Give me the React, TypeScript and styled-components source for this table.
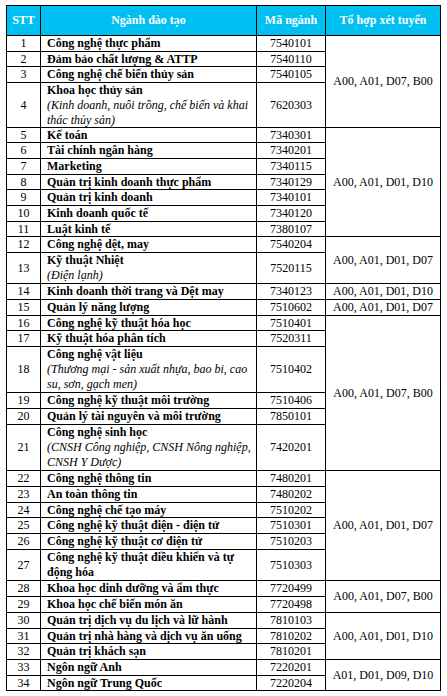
import React from "react";
import styled, { createGlobalStyle } from "styled-components";

const Global = createGlobalStyle`
  html, body { margin: 0; padding: 0; background: #ffffff; }
  body { font-family: "Liberation Serif", "Times New Roman", serif; color: #000; }
`;

const Page = styled.div`
  padding: 5px 0 0 6px;
`;

const Table = styled.div<{ $rows: string }>`
  display: grid;
  grid-template-columns: 34px 216px 69px 115px;
  grid-template-rows: ${(p) => p.$rows};
  width: 435px;
  box-sizing: border-box;
  border-top: 1px solid #000;
  border-left: 1px solid #000;
`;

const Cell = styled.div<{ $col: number; $span?: number }>`
  grid-column: ${(p) => p.$col};
  grid-row: span ${(p) => p.$span ?? 1};
  box-sizing: border-box;
  border-right: 1px solid #000;
  border-bottom: 1px solid #000;
  display: flex;
  align-items: center;
  justify-content: center;
  font-size: 12px;
  line-height: 15px;
  white-space: nowrap;
  overflow: hidden;
`;

const HeadCell = styled(Cell)`
  background: #00c0f2;
  color: #ffffff;
  font-weight: 700;
`;

const NameCell = styled(Cell)`
  flex-direction: column;
  align-items: flex-start;
  justify-content: center;
  padding-left: 6px;
`;

const Title = styled.span`
  font-weight: 700;
`;

const Note = styled.span`
  font-style: italic;
`;

type Row = {
  n: number;
  title: string[];
  note?: string[];
  code: string;
  h: number;
  combo?: string;
  span?: number;
};

const S = 15.7;

const rows: Row[] = [
  { n: 1, title: ["Công nghệ thực phẩm"], code: "7540101", h: S, combo: "A00, A01, D07, B00", span: 4 },
  { n: 2, title: ["Đảm bảo chất lượng & ATTP"], code: "7540110", h: S },
  { n: 3, title: ["Công nghệ chế biến thủy sản"], code: "7540105", h: S },
  { n: 4, title: ["Khoa học thủy sản"], note: ["(Kinh doanh, nuôi trồng, chế biến và khai", "thác thủy sản)"], code: "7620303", h: 44.5 },
  { n: 5, title: ["Kế toán"], code: "7340301", h: S, combo: "A00, A01, D01, D10", span: 7 },
  { n: 6, title: ["Tài chính ngân hàng"], code: "7340201", h: S },
  { n: 7, title: ["Marketing"], code: "7340115", h: S },
  { n: 8, title: ["Quản trị kinh doanh thực phẩm"], code: "7340129", h: S },
  { n: 9, title: ["Quản trị kinh doanh"], code: "7340101", h: S },
  { n: 10, title: ["Kinh doanh quốc tế"], code: "7340120", h: S },
  { n: 11, title: ["Luật kinh tế"], code: "7380107", h: S },
  { n: 12, title: ["Công nghệ dệt, may"], code: "7540204", h: S, combo: "A00, A01, D01, D07", span: 2 },
  { n: 13, title: ["Kỹ thuật Nhiệt"], note: ["(Điện lạnh)"], code: "7520115", h: 31 },
  { n: 14, title: ["Kinh doanh thời trang và Dệt may"], code: "7340123", h: S, combo: "A00, A01, D01, D10", span: 1 },
  { n: 15, title: ["Quản lý năng lượng"], code: "7510602", h: S, combo: "A00, A01, D01, D07", span: 1 },
  { n: 16, title: ["Công nghệ kỹ thuật hóa học"], code: "7510401", h: S, combo: "A00, A01, D07, B00", span: 6 },
  { n: 17, title: ["Kỹ thuật hóa phân tích"], code: "7520311", h: S },
  { n: 18, title: ["Công nghệ vật liệu"], note: ["(Thương mại - sản xuất nhựa, bao bi, cao", "su, sơn, gạch men)"], code: "7510402", h: 46.5 },
  { n: 19, title: ["Công nghệ kỹ thuật môi trường"], code: "7510406", h: S },
  { n: 20, title: ["Quản lý tài nguyên và môi trường"], code: "7850101", h: S },
  { n: 21, title: ["Công nghệ sinh học"], note: ["(CNSH Công nghiệp, CNSH Nông nghiệp,", "CNSH Y Dược)"], code: "7420201", h: 46.5 },
  { n: 22, title: ["Công nghệ thông tin"], code: "7480201", h: S, combo: "A00, A01, D01, D07", span: 6 },
  { n: 23, title: ["An toàn thông tin"], code: "7480202", h: S },
  { n: 24, title: ["Công nghệ chế tạo máy"], code: "7510202", h: S },
  { n: 25, title: ["Công nghệ kỹ thuật điện - điện tử"], code: "7510301", h: S },
  { n: 26, title: ["Công nghệ kỹ thuật cơ điện tử"], code: "7510203", h: S },
  { n: 27, title: ["Công nghệ kỹ thuật điều khiển và tự", "động hóa"], code: "7510303", h: 31.5 },
  { n: 28, title: ["Khoa học dinh dưỡng và ẩm thực"], code: "7720499", h: S, combo: "A00, A01, D07, B00", span: 2 },
  { n: 29, title: ["Khoa học chế biến món ăn"], code: "7720498", h: S },
  { n: 30, title: ["Quản trị dịch vụ du lịch và lữ hành"], code: "7810103", h: S, combo: "A00, A01, D01, D10", span: 3 },
  { n: 31, title: ["Quản trị nhà hàng và dịch vụ ăn uống"], code: "7810202", h: S },
  { n: 32, title: ["Quản trị khách sạn"], code: "7810201", h: S },
  { n: 33, title: ["Ngôn ngữ Anh"], code: "7220201", h: S, combo: "A01, D01, D09, D10", span: 2 },
  { n: 34, title: ["Ngôn ngữ Trung Quốc"], code: "7220204", h: S },
];

function rowTemplate(): string {
  const heights: number[] = [30];
  let acc = 0;
  let prev = 0;
  for (const r of rows) {
    acc += r.h;
    const pos = Math.round(acc);
    heights.push(pos - prev);
    prev = pos;
  }
  return heights.map((h) => `${h}px`).join(" ");
}

export default function App() {
  const template = rowTemplate();
  return (
    <>
      <Global />
      <Page>
        <Table $rows={template}>
          <HeadCell $col={1}>STT</HeadCell>
          <HeadCell $col={2}>Ngành đào tạo</HeadCell>
          <HeadCell $col={3}>Mã ngành</HeadCell>
          <HeadCell $col={4}>Tổ hợp xét tuyển</HeadCell>
          {rows.map((r) => (
            <React.Fragment key={r.n}>
              <Cell $col={1}>{r.n}</Cell>
              <NameCell $col={2}>
                {r.title.map((t, i) => (
                  <Title key={`t${i}`}>{t}</Title>
                ))}
                {r.note?.map((t, i) => (
                  <Note key={`n${i}`}>{t}</Note>
                ))}
              </NameCell>
              <Cell $col={3}>{r.code}</Cell>
              {r.combo && (
                <Cell $col={4} $span={r.span}>
                  {r.combo}
                </Cell>
              )}
            </React.Fragment>
          ))}
        </Table>
      </Page>
    </>
  );
}
